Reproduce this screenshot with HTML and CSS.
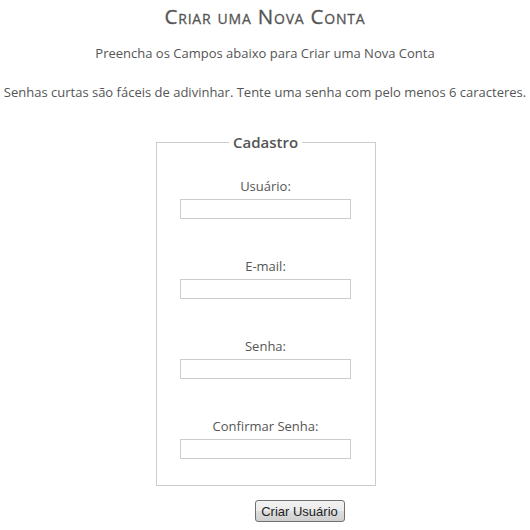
FILE: index.html
```html
<!DOCTYPE html>
<html lang="pt">
<head>
<meta charset="utf-8">
<title>Criar uma Nova Conta</title>
<link rel="stylesheet" href="styles.css">
</head>
<body>
<div class="page">
  <h1 class="title">Criar uma Nova Conta</h1>
  <p class="intro">Preencha os Campos abaixo para Criar uma Nova Conta</p>
  <p class="hint">Senhas curtas são fáceis de adivinhar. Tente uma senha com pelo menos 6 caracteres.</p>
  <form class="form">
    <fieldset class="box">
      <legend class="legend">Cadastro</legend>
      <div class="field">
        <label class="label" for="u">Usuário:</label>
        <input class="input" id="u" type="text">
      </div>
      <div class="field">
        <label class="label" for="e">E-mail:</label>
        <input class="input" id="e" type="text">
      </div>
      <div class="field">
        <label class="label" for="s">Senha:</label>
        <input class="input" id="s" type="password">
      </div>
      <div class="field">
        <label class="label" for="c">Confirmar Senha:</label>
        <input class="input" id="c" type="password">
      </div>
    </fieldset>
    <div class="actions">
      <button class="btn" type="button">Criar Usuário</button>
    </div>
  </form>
</div>
</body>
</html>
```
FILE: styles.css
```css
html, body {
  margin: 0;
  padding: 0;
  background: #fff;
}
.page {
  display: flex;
  flex-direction: column;
  align-items: center;
  font-family: "Open Sans", "Noto Sans", sans-serif;
  font-size: 13px;
  color: #555;
  padding-top: 4px;
}
.title {
  margin: 0;
  font-size: 20.5px;
  font-weight: 400;
  font-variant: small-caps;
  letter-spacing: 0.8px;
  color: #555;
  line-height: 24px;
  -webkit-text-stroke: 0.3px #555;
}
.intro {
  margin: 16px 0 0;
  line-height: 18px;
  font-size: 13px;
}
.hint {
  margin: 21px 0 0;
  line-height: 18px;
  font-size: 13px;
}
.form {
  display: flex;
  flex-direction: column;
  align-items: center;
  margin-top: 31px;
}
.box {
  width: 220px;
  box-sizing: border-box;
  border: 1px solid #ccc;
  margin: 0;
  padding: 25px 0 26px;
  display: flex;
  flex-direction: column;
  align-items: center;
  gap: 38px;
  min-inline-size: 0;
  margin-left: 1px;
}
.legend {
  margin: 0 auto;
  padding: 0 4px;
  font-size: 15px;
  font-weight: 600;
  color: #555;
  line-height: 20px;
}
.field {
  display: flex;
  flex-direction: column;
  align-items: center;
  gap: 4px;
}
.label {
  line-height: 18px;
  font-size: 13px;
}
.input {
  width: 171px;
  height: 20px;
  box-sizing: border-box;
  border: 1px solid #ccc;
  margin: 0;
  padding: 0 2px;
  background: #fff;
}
.actions {
  margin-top: 14px;
  margin-left: 69px;
}
.btn {
  font-family: "Liberation Sans", Arial, sans-serif;
  font-size: 13px;
  color: #222;
  height: 22px;
  width: 90px;
  padding: 0;
  border: 1px solid #707070;
  border-radius: 3px;
  background: linear-gradient(#f2f2f2 0%, #ebebeb 50%, #dddddd 51%, #cfcfcf 100%);
}
```
